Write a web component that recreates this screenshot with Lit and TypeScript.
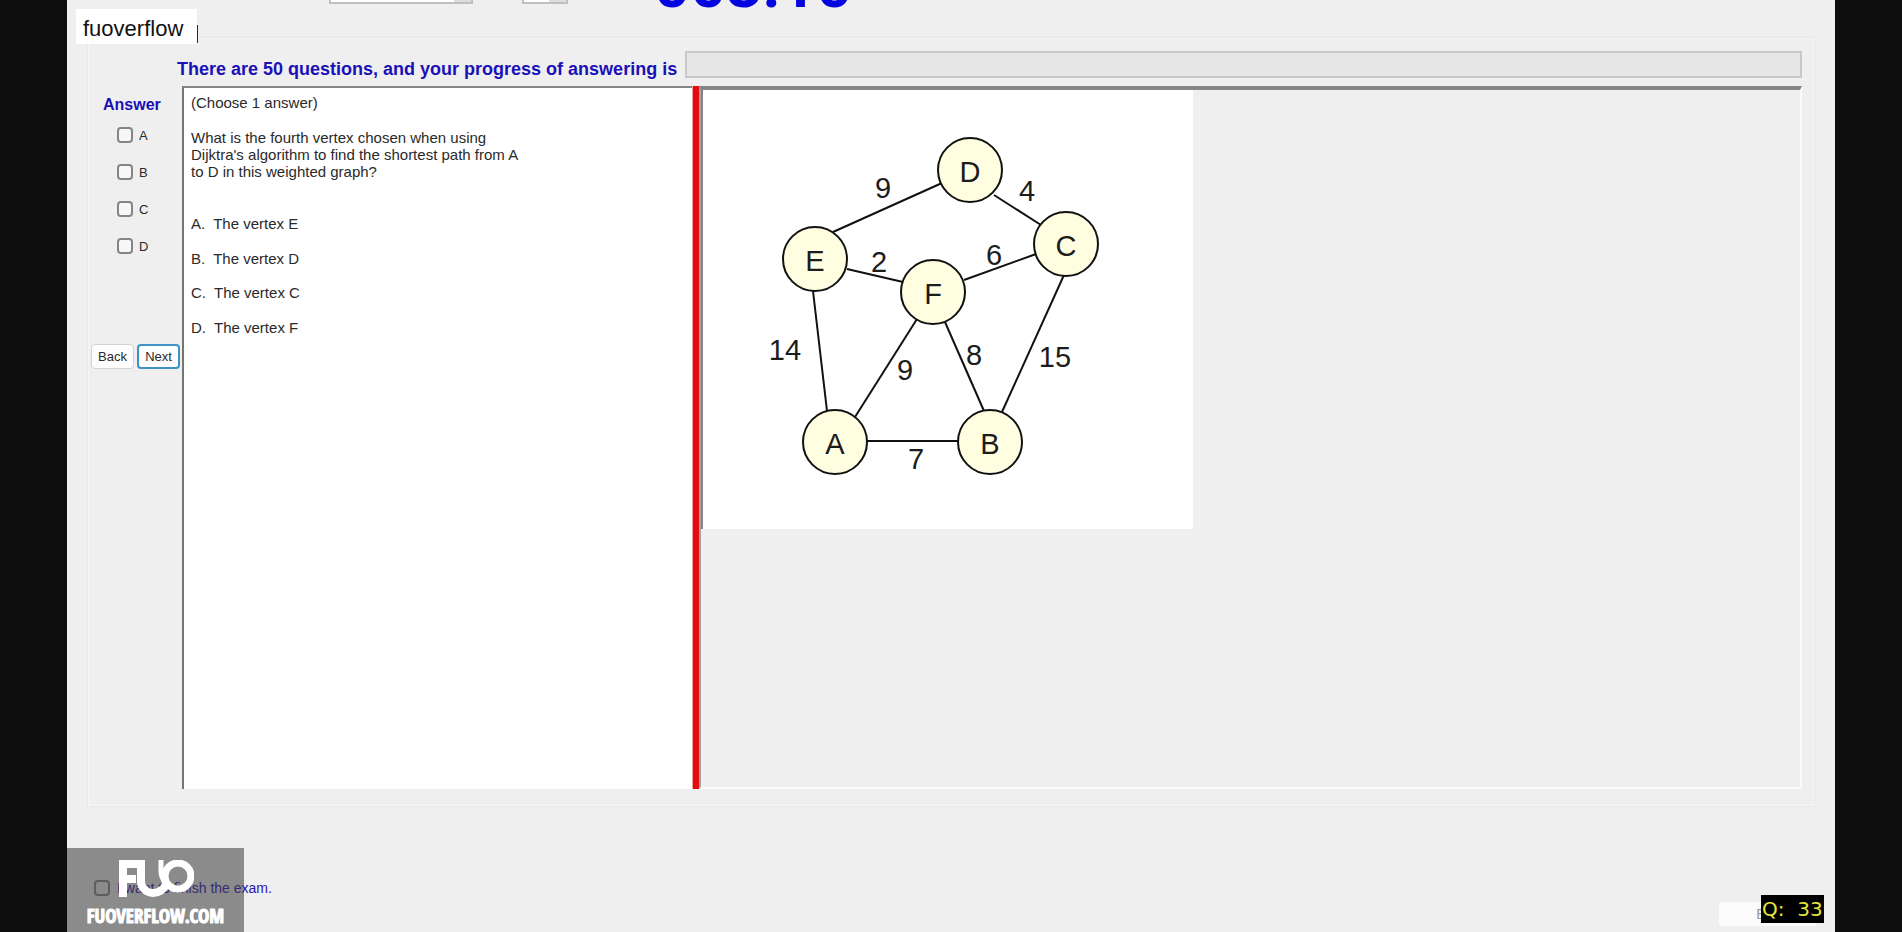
import { LitElement, html, svg, css } from "lit";
import { customElement, state } from "lit/decorators.js";

type GraphNode = { id: string; x: number; y: number };
type Edge = { x1: number; y1: number; x2: number; y2: number; w: string; lx: number; ly: number };

const NODES: GraphNode[] = [
  { id: "D", x: 267, y: 80 },
  { id: "C", x: 363, y: 154 },
  { id: "E", x: 112, y: 169 },
  { id: "F", x: 230, y: 202 },
  { id: "A", x: 132, y: 352 },
  { id: "B", x: 287, y: 352 },
];

const EDGES: Edge[] = [
  { x1: 130, y1: 142, x2: 239, y2: 93, w: "9", lx: 180, ly: 108 },
  { x1: 291, y1: 105, x2: 338, y2: 135, w: "4", lx: 324, ly: 111 },
  { x1: 144, y1: 179, x2: 200, y2: 192, w: "2", lx: 176, ly: 182 },
  { x1: 261, y1: 190, x2: 333, y2: 164, w: "6", lx: 291, ly: 175 },
  { x1: 110, y1: 201, x2: 124, y2: 321, w: "14", lx: 82, ly: 270 },
  { x1: 214, y1: 229, x2: 152, y2: 327, w: "9", lx: 202, ly: 290 },
  { x1: 242, y1: 232, x2: 281, y2: 321, w: "8", lx: 271, ly: 275 },
  { x1: 361, y1: 185, x2: 299, y2: 322, w: "15", lx: 352, ly: 277 },
  { x1: 164, y1: 351, x2: 257, y2: 351, w: "7", lx: 213, ly: 379 },
];

@customElement("weighted-graph")
class WeightedGraph extends LitElement {
  static styles = css`
    :host { display: block; background: #fff; }
    .graph { display: block; width: 490px; height: 439px; }
    .edge { stroke: #111; stroke-width: 2; }
    .node { fill: #fffee0; stroke: #111; stroke-width: 2; }
    .label { font: 29px "Liberation Sans", Arial, sans-serif; fill: #1c1c1c; text-anchor: middle; }
  `;
  render() {
    return html`<svg class="graph" viewBox="0 0 490 439" role="img" aria-label="Weighted graph">
      ${EDGES.map((e) => svg`<line class="edge" x1=${e.x1} y1=${e.y1} x2=${e.x2} y2=${e.y2}></line>
        <text class="label" x=${e.lx} y=${e.ly}>${e.w}</text>`)}
      ${NODES.map((n) => svg`<circle class="node" cx=${n.x} cy=${n.y} r="32"></circle>
        <text class="label" x=${n.x} y=${n.y + 12}>${n.id}</text>`)}
    </svg>`;
  }
}

@customElement("app-root")
class AppRoot extends LitElement {
  @state() private chosen = new Set<string>();

  static styles = css`
    :host {
      display: block;
      height: 100vh;
      padding: 0 67px;
      box-sizing: border-box;
      overflow: hidden;
      background: #0e0e0e;
      font-family: "Liberation Sans", Arial, sans-serif;
      color: #2a2a2a;
    }
    * { box-sizing: border-box; }
    .exam {
      position: relative;
      height: 100%;
      padding: 0 20px;
      background: #efefef;
      display: flex;
      flex-direction: column;
      overflow: hidden;
    }
    .top { display: flex; align-items: flex-end; flex: none; height: 37px; padding: 0 0 33px 242px; }
    .pick { appearance: none; flex: none; height: 30px; width: 144px; border: 2px solid #c0c0c4; background: #fff linear-gradient(#ddd, #ddd) no-repeat right / 17px 100%; }
    .pick.small { width: 46px; margin-left: 49px; }
    .timer { flex: none; margin-left: 86px; margin-bottom: -13px; font: bold 63px/62px Roboto, Arial, sans-serif; color: #0505e0; }
    .group {
      flex: none;
      height: 770px;
      border: 2px solid #f6f6f6;
      outline: 1px solid #e8e8e8;
      outline-offset: -1px;
      padding: 12px 11px 16px 0;
      display: grid;
      grid-template-columns: 93px 1fr;
      grid-template-rows: 26px 1fr;
      row-gap: 9px;
    }
    .status { grid-column: 1 / -1; display: flex; align-items: flex-start; gap: 8px; padding-left: 88px; }
    .status-label { font-size: 18px; line-height: 20px; font-weight: bold; color: #1a10b8; padding-top: 8px; white-space: nowrap; flex: none; }
    .bar { appearance: none; flex: 1; height: 27px; border: 2px solid #c8c8c8; background: #e6e6e6; min-width: 0; }
    .bar::-webkit-progress-bar { background: #e6e6e6; }
    .bar::-webkit-progress-value { background: #06b025; }
    .answers { display: flex; flex-direction: column; }
    .answers-title { margin: 0; padding: 10px 0 12px 14px; font-size: 16px; line-height: 18px; font-weight: bold; color: #1a10b8; }
    .choice { display: flex; align-items: center; gap: 6px; height: 18px; margin-bottom: 19px; padding-left: 28px; font-size: 13px; }
    .tick { appearance: none; flex: none; width: 16px; height: 16px; margin: 0; border: 2px solid #858585; border-radius: 4px; background: #f7f7f7; }
    .tick:checked { background: #0067c0; }
    .nav { display: flex; gap: 3px; margin-top: 70px; padding-left: 2px; }
    .btn { width: 43px; height: 25px; padding: 0; border: 1px solid #d2d2d2; border-radius: 4px; background: #fdfdfd; font: 13px/20px "Liberation Sans", Arial, sans-serif; color: #2a2a2a; }
    .btn.primary { border: 2px solid #3f93c4; }
    .panes { display: grid; grid-template-columns: 510px 7px 1fr; min-height: 0; }
    .question { background: #fff; border-top: 2px solid #858585; border-left: 2px solid #757575; padding: 6px 7px; font-size: 15px; line-height: 17px; }
    .para { margin: 0 0 18px; max-width: 335px; }
    .options { list-style: none; margin: 0; padding: 17px 0 0; }
    .option { display: flex; gap: 8px; margin-bottom: 18px; }
    .option:nth-child(even) { margin-bottom: 17px; }
    .split { background: #e30b10; border-left: 1px solid #f3a0a0; }
    .figure { border-style: solid; border-width: 4px 2px 2px 2px; border-color: #868686 #fafafa #fafafa #a8a0a0; }
    .figure-image { width: 492px; border-left: 2px solid #868686; }
    .finish { display: flex; align-items: center; gap: 7px; margin-top: 71px; padding-left: 7px; font-size: 14px; line-height: 20px; color: #2c14b4; }
    .finish .tick { background: #efefef; }
    .tag { position: absolute; left: 9px; top: 9px; padding: 8px 7px; width: 121px; height: 35px; background: #fff; font-size: 22px; line-height: 24px; color: #111; }
    .caret { position: absolute; right: -1px; top: 16px; width: 1px; height: 18px; background: #2a2a20; }
    .mark { position: absolute; left: 0; bottom: 0; width: 177px; height: 84px; background: rgba(60, 60, 60, 0.56); display: flex; flex-direction: column; align-items: center; padding-top: 12px; }
    .logo { display: block; width: 76px; height: 38px; }
    .site { font: bold 19px/24px "Liberation Sans Narrow", "Open Sans Condensed", "Roboto Condensed", sans-serif; -webkit-text-stroke: 1px #fff; color: #fff; margin-top: 6px; }
    .exit { position: absolute; right: 18px; bottom: 6px; width: 98px; height: 24px; border: 0; background: #fbfbfb; border-radius: 3px; font: 14px/20px "Liberation Sans", Arial, sans-serif; color: #999; }
    .badge { position: absolute; right: 11px; bottom: 9px; width: 63px; height: 28px; background: #000; color: #e2e63c; font: 20px/28px "DejaVu Sans", sans-serif; white-space: pre; padding-left: 1px; }
  `;

  private toggle(id: string) {
    const next = new Set(this.chosen);
    next.has(id) ? next.delete(id) : next.add(id);
    this.chosen = next;
  }

  render() {
    const options = [["A", "E"], ["B", "D"], ["C", "C"], ["D", "F"]];
    return html`<main class="exam">
      <header class="top">
        <select class="pick" aria-label="Font"></select>
        <select class="pick small" aria-label="Size"></select>
        <span class="timer">003:10</span>
      </header>
      <section class="group">
        <div class="status">
          <label class="status-label" for="bar">There are 50 questions, and your progress of answering is</label>
          <progress class="bar" id="bar" max="50" value="0"></progress>
        </div>
        <div class="answers">
          <h2 class="answers-title">Answer</h2>
          ${options.map(([id]) => html`<label class="choice"><input class="tick" type="checkbox" .checked=${this.chosen.has(id)} @change=${() => this.toggle(id)} />${id}</label>`)}
          <div class="nav"><button class="btn">Back</button><button class="btn primary">Next</button></div>
        </div>
        <div class="panes">
          <article class="question">
            <p class="para">(Choose 1 answer)</p>
            <p class="para">What is the fourth vertex chosen when using Dijktra's algorithm to find the shortest path from A to D in this weighted graph?</p>
            <ul class="options">
              ${options.map(([id, v]) => html`<li class="option"><span>${id}.</span><span>The vertex ${v}</span></li>`)}
            </ul>
          </article>
          <div class="split"></div>
          <div class="figure"><weighted-graph class="figure-image"></weighted-graph></div>
        </div>
      </section>
      <label class="finish"><input class="tick" type="checkbox" />I want to finish the exam.</label>
      <button class="exit">Exit</button>
      <div class="badge">Q:  33</div>
      <div class="mark">
        <svg class="logo" viewBox="0 0 76 38" aria-hidden="true">
          <g fill="none" stroke="#fff">
            <path stroke-width="8" d="M5 37V4H19M5 19H18"></path>
            <path stroke-width="8" d="M23 0V20A12 12 0 0 0 35 33C42 33 46 29 49 23"></path>
            <circle cx="60" cy="16" r="13" stroke-width="7"></circle>
            <path d="M43 0V11C43 16 45 20 48 24" stroke-width="5"></path>
          </g>
        </svg>
        <span class="site">FUOVERFLOW.COM</span>
      </div>
      <div class="tag">fuoverflow<span class="caret"></span></div>
    </main>`;
  }
}
